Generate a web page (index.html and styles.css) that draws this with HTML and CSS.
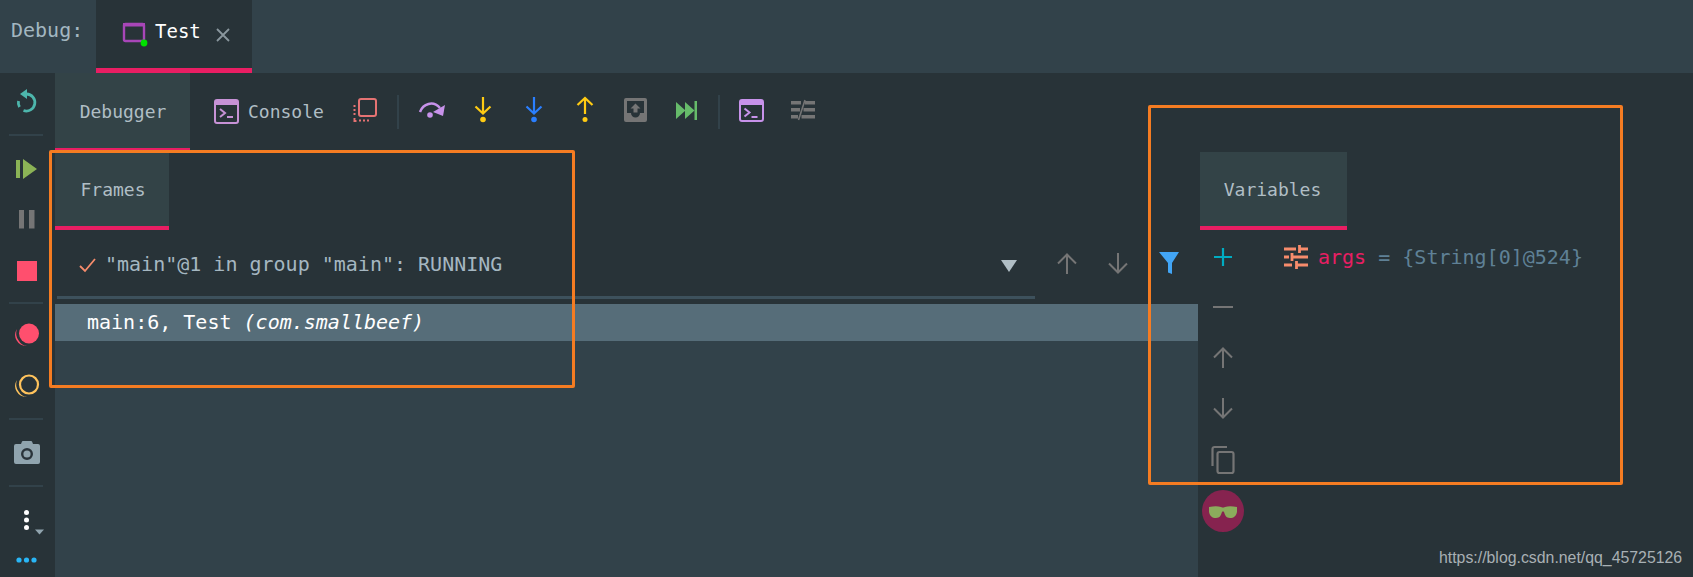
FILE: index.html
```html
<!DOCTYPE html>
<html lang="en">
<head>
<meta charset="utf-8">
<title>Debug</title>
<link rel="stylesheet" href="styles.css">
</head>
<body>
<div class="app">
  <header class="topbar">
    <span class="debug-label">Debug:</span>
    <div class="run-tab">
      <svg class="run-icon" width="26" height="26" viewBox="0 0 26 26"><rect x="3" y="5" width="20" height="17" rx="1.500" fill="none" stroke="#a846b8" stroke-width="2.400"/><rect x="2" y="4" width="22" height="3.500" fill="#a846b8"/><circle cx="23" cy="24" r="3.400" fill="#00e000"/></svg>
      <span class="run-name">Test</span>
      <svg class="close-icon" width="14" height="14" viewBox="0 0 14 14"><path d="M1 1l12 12M13 1L1 13" stroke="#8a979e" stroke-width="1.800"/></svg>
    </div>
  </header>
  <div class="body">
    <nav class="rail">
      <div class="rail-btn"><svg width="22" height="25" viewBox="0 0 22 25"><path d="M10.500 5a8.500 8.500 0 1 1-3 16.500M3.500 18a8.500 8.500 0 0 1-1-6" fill="none" stroke="#4db6ac" stroke-width="2.800"/><path d="M11 0v10L4 5z" fill="#4db6ac"/></svg></div>
      <div class="rail-sep"></div>
      <div class="rail-btn"><svg width="22" height="20" viewBox="0 0 22 20"><path d="M0 1h4v18H0zM7 0l14 10L7 20z" fill="#8bb356"/></svg></div>
      <div class="rail-btn"><svg width="18" height="19" viewBox="0 0 18 19"><path d="M1 0h5v18.500H1zM11 0h5.500v18.500H11z" fill="#757575"/></svg></div>
      <div class="rail-btn"><svg width="20" height="20" viewBox="0 0 20 20"><rect width="20" height="20" fill="#ff4f6e"/></svg></div>
      <div class="rail-sep rail-sep-short"></div>
      <div class="rail-btn"><svg width="28" height="24" viewBox="0 0 28 24"><path d="M4 6a11 11 0 0 0 10 17 10 10 0 0 1-8-5 12 12 0 0 1-2-12z" fill="#ff4f6e"/><circle cx="16" cy="10.500" r="10" fill="#ff4f6e"/></svg></div>
      <div class="rail-btn"><svg width="28" height="24" viewBox="0 0 28 24"><path d="M4 6a11 11 0 0 0 10 17 10 10 0 0 1-8-5 12 12 0 0 1-2-12z" fill="#ffc35c"/><circle cx="16" cy="10.500" r="9" fill="none" stroke="#ffc35c" stroke-width="2.200"/></svg></div>
      <div class="rail-sep"></div>
      <div class="rail-btn"><svg width="26" height="23" viewBox="0 0 26 23"><path d="M2 3h5l1-2.500a1 1 0 0 1 1-.5h8a1 1 0 0 1 1 .5L19 3h5a2 2 0 0 1 2 2v16a2 2 0 0 1-2 2H2a2 2 0 0 1-2-2V5a2 2 0 0 1 2-2z" fill="#90a4ae"/><circle cx="13" cy="13" r="4.800" fill="none" stroke="#2a343b" stroke-width="2.400"/></svg></div>
      <div class="rail-sep"></div>
      <div class="rail-btn rail-more"><svg width="26" height="28" viewBox="0 0 26 28"><g fill="#fff"><circle cx="12.500" cy="6.500" r="2.500"/><circle cx="12.500" cy="14" r="2.500"/><circle cx="12.500" cy="21.500" r="2.500"/></g><path d="M21 23.500h9l-4.500 5z" fill="#90a4ae"/></svg></div>
      <div class="rail-dots"><svg width="22" height="6" viewBox="0 0 22 6"><g fill="#29b6f6"><circle cx="3" cy="3" r="2.600"/><circle cx="10.500" cy="3" r="2.600"/><circle cx="18" cy="3" r="2.600"/></g></svg></div>
    </nav>
    <main class="main">
      <div class="toolbar">
        <div class="tool-tab tool-tab-active">Debugger</div>
        <div class="tool-tab tool-tab-console">
          <svg width="25" height="25" viewBox="0 0 25 25"><rect x="1" y="1" width="23" height="23" rx="2" fill="none" stroke="#c792d6" stroke-width="2"/><rect x="1" y="1" width="23" height="5" fill="#c792d6"/><path d="M6 10l5 4-5 4" fill="none" stroke="#c792d6" stroke-width="2"/><path d="M13 18h6" stroke="#c792d6" stroke-width="2"/></svg>
          <span>Console</span>
        </div>
        <div class="tool-btn"><svg width="24" height="24" viewBox="0 0 24 24"><rect x="6" y="1" width="17" height="17" rx="2" fill="none" stroke="#e57373" stroke-width="2"/><path d="M1.500 7v2M1.500 11v2M1.500 15v2M1.500 20v3h2M6 22.500h2M10 22.500h2M14 22.500h2" stroke="#e57373" stroke-width="2"/></svg></div>
        <div class="tool-sep"></div>
        <div class="tool-btn"><svg width="28" height="18" viewBox="0 0 28 18"><path d="M2 11C5 3 15-1 22 7" fill="none" stroke="#c792ea" stroke-width="2.500"/><path d="M27 4l-2 11-10-4z" fill="#c792ea"/><circle cx="12" cy="14" r="2.800" fill="#c792ea"/></svg></div>
        <div class="tool-btn"><svg width="18" height="26" viewBox="0 0 18 26"><path d="M9 0v16M1.500 9.500L9 16.500l7.500-7" fill="none" stroke="#ffcb13" stroke-width="2.200"/><circle cx="9" cy="22.500" r="2.800" fill="#ffcb13"/></svg></div>
        <div class="tool-btn"><svg width="18" height="26" viewBox="0 0 18 26"><path d="M9 0v16M1.500 9.500L9 16.500l7.500-7" fill="none" stroke="#2a7fff" stroke-width="2.200"/><circle cx="9" cy="22.500" r="2.800" fill="#2a7fff"/></svg></div>
        <div class="tool-btn"><svg width="18" height="26" viewBox="0 0 18 26"><path d="M9 17V1M1.500 8L9 1l7.500 7" fill="none" stroke="#ffcb13" stroke-width="2.200"/><circle cx="9" cy="22.500" r="2.500" fill="#ffcb13"/></svg></div>
        <div class="tool-btn"><svg width="23" height="24" viewBox="0 0 23 24"><path fill-rule="evenodd" d="M2 0h19a2 2 0 0 1 2 2v20a2 2 0 0 1-2 2H2a2 2 0 0 1-2-2V2a2 2 0 0 1 2-2zM3 3v12h4a4.500 4.500 0 0 0 9 0h4V3z" fill="#757575"/><path d="M11.500 5.500l5 5h-3v4h-4v-4h-3z" fill="#757575"/></svg></div>
        <div class="tool-btn"><svg width="21" height="19" viewBox="0 0 21 19"><path d="M0 1l9.500 8.500L0 18zM9 1l9.500 8.500L9 18z" fill="#66bb6a"/><rect x="18.500" y="0" width="2.500" height="19" fill="#66bb6a"/></svg></div>
        <div class="tool-sep tool-sep-narrow"></div>
        <div class="tool-btn"><svg width="25" height="23" viewBox="0 0 25 23"><rect x="1" y="1" width="23" height="21" rx="2" fill="none" stroke="#c792ea" stroke-width="2"/><rect x="1" y="1" width="23" height="5" fill="#c792ea"/><path d="M5.500 9.500l5 4-5 4" fill="none" stroke="#c792ea" stroke-width="2"/><path d="M12.500 18h6" stroke="#c792ea" stroke-width="2"/></svg></div>
        <div class="tool-btn"><svg width="24" height="20" viewBox="0 0 24 20"><path d="M0 1h10v3.500H0zM14 1h10v3.500H14zM0 8h9v3.500H0zM12.500 8H24v3.500H12.500zM0 15h7v3.500H0zM10.500 15H24v3.500H10.500z" fill="#757575"/><path d="M7.500 20L14 0" stroke="#757575" stroke-width="1.600"/></svg></div>
      </div>
      <div class="panels">
        <section class="frames">
          <div class="panel-tab panel-tab-frames">Frames</div>
          <div class="thread-row">
            <div class="thread-select">
              <svg class="check" width="17" height="15" viewBox="0 0 17 15"><path d="M1 8l5 5L16 1" fill="none" stroke="#f78c6c" stroke-width="1.800"/></svg>
              <span class="thread-name">"main"@1 in group "main": RUNNING</span>
              <svg class="caret" width="16" height="12" viewBox="0 0 16 12"><path d="M0 0h16L8 12z" fill="#b0bec5"/></svg>
            </div>
            <div class="frame-tool"><svg width="20" height="21" viewBox="0 0 20 21"><path d="M10 21V2M1 10.500L10 1.500l9 9" fill="none" stroke="#757575" stroke-width="2"/></svg></div>
            <div class="frame-tool"><svg width="20" height="21" viewBox="0 0 20 21"><path d="M10 0v19M1 10.500l9 9 9-9" fill="none" stroke="#757575" stroke-width="2"/></svg></div>
            <div class="frame-tool"><svg width="20" height="23" viewBox="0 0 20 23"><path d="M0 0h20L13 11v11l-4-1.500V11z" fill="#42a5f5"/></svg></div>
          </div>
          <div class="thread-bar"></div>
          <div class="frame-row">main:6, Test <em>(com.smallbeef)</em></div>
          <div class="frames-rest"></div>
        </section>
        <section class="vars">
          <div class="panel-tab panel-tab-vars">Variables</div>
          <div class="vars-body">
            <div class="var-tools">
              <div class="var-tool var-tool-add"><svg width="18" height="18" viewBox="0 0 18 18"><path d="M9 0v18M0 9h18" stroke="#00acc1" stroke-width="2.200"/></svg></div>
              <div class="var-tool"><svg width="20" height="2" viewBox="0 0 20 2"><rect width="20" height="2" fill="#757575"/></svg></div>
              <div class="var-tool"><svg width="20" height="21" viewBox="0 0 20 21"><path d="M10 21V2M1 10.500L10 1.500l9 9" fill="none" stroke="#757575" stroke-width="2"/></svg></div>
              <div class="var-tool"><svg width="20" height="21" viewBox="0 0 20 21"><path d="M10 0v19M1 10.500l9 9 9-9" fill="none" stroke="#757575" stroke-width="2"/></svg></div>
              <div class="var-tool"><svg width="24" height="28" viewBox="0 0 24 28"><path d="M1.500 20V3a2 2 0 0 1 2-2H16" fill="none" stroke="#757575" stroke-width="2.200"/><rect x="6.500" y="6" width="16" height="21" rx="2" fill="none" stroke="#757575" stroke-width="2.200"/></svg></div>
              <div class="var-tool"><svg width="42" height="42" viewBox="0 0 42 42"><circle cx="21" cy="21" r="21" fill="#86234f"/><path d="M7 17c5-1 9-1 12 0 2 .8 2 .8 4 0 3-1 7-1 12 0v5c-1 4-3 6-7 6-4 0-5-3-6-6-1-1-1-1-2 0-1 3-2 6-6 6-4 0-6-2-7-6z" fill="#8bab5c"/></svg></div>
            </div>
            <div class="var-list">
              <svg width="24" height="24" viewBox="0 0 24 24"><path d="M0 4h12M15 4h9M15.500 0v8M0 12h5M8 12h16M8 8v8M0 20h8M12 20h12M12.500 16v8" fill="none" stroke="#f78c6c" stroke-width="2.800"/></svg>
              <span class="var-text"><span class="var-name">args</span> <span class="var-value">= {String[0]@524}</span></span>
            </div>
          </div>
        </section>
      </div>
    </main>
  </div>
  <div class="mark mark-frames"></div>
  <div class="mark mark-vars"></div>
  <div class="watermark">https://blog.csdn.net/qq_45725126</div>
</div>
</body>
</html>
```
FILE: styles.css
```css
* { box-sizing: border-box; }
html, body { margin: 0; padding: 0; background: #283338; }
.app {
  position: relative;
  width: 1693px;
  height: 577px;
  overflow: hidden;
  display: flex;
  flex-direction: column;
  font-family: "DejaVu Sans Mono", "Liberation Mono", monospace;
  color: #b0bec5;
}
svg { display: block; overflow: visible; }

.topbar { height: 73px; flex: none; display: flex; background: #32424a; }
.debug-label { width: 96px; padding: 18px 0 0 11px; font-size: 20px; line-height: 24px; color: #a3b7c1; }
.run-tab {
  width: 156px;
  background: #283338;
  border-bottom: 5px solid #e91e63;
  display: flex;
  align-items: flex-start;
  padding: 19px 0 0 25px;
}
.run-name { margin-left: 8px; font-size: 19px; line-height: 24px; color: #fff; }
.close-icon { margin: 9px 0 0 15px; }

.body { flex: 1; display: flex; min-height: 0; }
.rail { width: 55px; flex: none; display: flex; flex-direction: column; align-items: stretch; padding: 3px 2px 0 0; }
.rail-btn { height: 51px; display: flex; align-items: center; justify-content: center; }
.rail-sep { height: 16px; display: flex; align-items: center; padding: 0 9px; }
.rail-sep::before { content: ""; display: block; width: 34px; height: 2px; background: #32424a; }
.rail-sep-short { height: 13px; }
.rail-dots { display: flex; justify-content: center; margin-top: 12px; }

.main { flex: 1; min-width: 0; display: flex; flex-direction: column; }
.toolbar { height: 77px; flex: none; display: flex; align-items: stretch; }
.tool-tab { display: flex; align-items: center; font-size: 18px; color: #b0bec5; }
.tool-tab-active { width: 135px; padding: 2px 0 0 1px; justify-content: center; background: #334347; border-bottom: 2px solid #e91e63; }
.tool-tab-console { width: 149px; padding-left: 24px; gap: 9px; }
.tool-btn { width: 51px; padding-bottom: 3px; display: flex; align-items: center; justify-content: center; }
.tool-sep { width: 16px; display: flex; align-items: center; justify-content: center; }
.tool-sep::before { content: ""; width: 2px; height: 34px; background: #32424a; }
.tool-sep-narrow { width: 14px; }

.panels { flex: 1; min-height: 0; display: flex; padding-top: 2px; }
.frames { width: 1143px; flex: none; display: flex; flex-direction: column; }
.panel-tab {
  height: 78px;
  flex: none;
  display: flex;
  align-items: center;
  justify-content: center;
  background: #334347;
  border-bottom: 4px solid #e91e63;
  font-size: 18px;
  color: #b0bec5;
}
.panel-tab-frames { width: 114px; padding-left: 2px; }
.panel-tab-vars { width: 147px; margin-left: 2px; padding-right: 2px; }
.thread-row { height: 66px; flex: none; display: flex; align-items: center; }
.thread-select { width: 986px; flex: none; display: flex; align-items: center; padding: 0 0 0 24px; }
.check { margin-top: 4px; }
.thread-name { margin-left: 9px; margin-top: 2px; font-size: 20px; line-height: 24px; color: #a5b7c1; }
.caret { margin-left: auto; margin-top: 6px; margin-right: 24px; }
.frame-tool { width: 51px; display: flex; justify-content: center; }
.thread-bar { height: 3px; width: 978px; margin-left: 2px; flex: none; background: #3d515c; }
.frame-row {
  height: 37px;
  flex: none;
  margin-top: 5px;
  padding-left: 32px;
  background: #566d79;
  font-size: 20px;
  line-height: 37px;
  color: #fff;
  white-space: pre;
}
.frame-row em { font-style: italic; }
.frames-rest { flex: 1; background: #32424a; }

.vars { flex: 1; min-width: 0; display: flex; flex-direction: column; }
.vars-body { flex: 1; display: flex; min-height: 0; }
.var-tools { width: 50px; flex: none; display: flex; flex-direction: column; }
.var-tool { height: 51px; flex: none; display: flex; align-items: center; justify-content: center; }
.var-tool-add { padding-top: 2px; }
.var-list { display: flex; align-items: flex-start; padding: 15px 0 0 36px; gap: 10px; }
.var-text { font-size: 20px; line-height: 24px; }
.var-name { color: #e91e63; }
.var-value { color: #5f8196; }

.mark { position: absolute; border: 3px solid #f57c22; border-radius: 2px; pointer-events: none; }
.mark-frames { left: 49px; top: 150px; width: 526px; height: 238px; }
.mark-vars { left: 1148px; top: 105px; width: 475px; height: 380px; }
.watermark {
  position: absolute;
  left: 1439px;
  top: 548px;
  font-family: "Liberation Sans", Arial, sans-serif;
  font-size: 15.85px;
  line-height: 20px;
  color: #a8b0b4;
  white-space: nowrap;
}
```
